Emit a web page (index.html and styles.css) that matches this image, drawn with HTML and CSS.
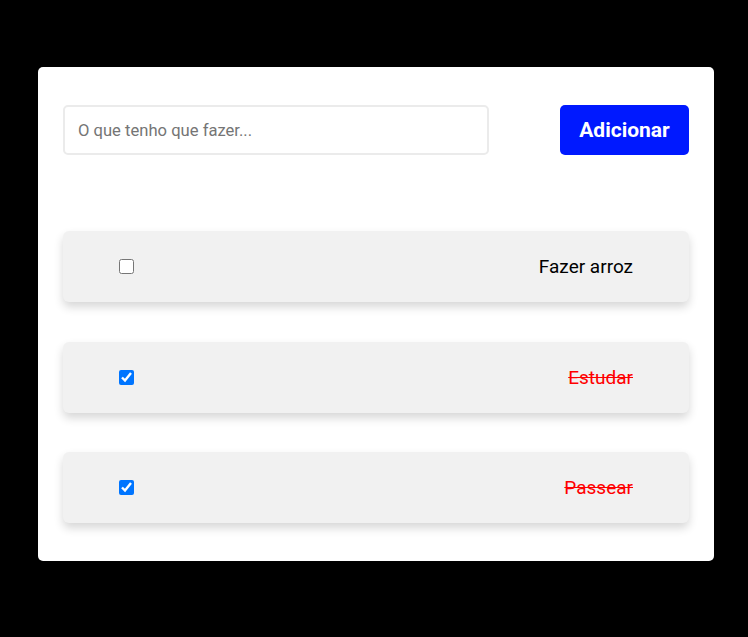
FILE: index.html
```html
<!DOCTYPE html>
<html lang="pt-BR">
<head>
<meta charset="utf-8">
<title>Tarefas</title>
<link rel="stylesheet" href="styles.css">
</head>
<body>
<main class="todo">
  <form class="todo-form">
    <input class="todo-input" type="text" placeholder="O que tenho que fazer...">
    <button class="todo-add" type="button">Adicionar</button>
  </form>
  <ul class="todo-list">
    <li class="todo-item">
      <input class="todo-check" type="checkbox">
      <span class="todo-text">Fazer arroz</span>
    </li>
    <li class="todo-item">
      <input class="todo-check" type="checkbox" checked>
      <span class="todo-text done">Estudar</span>
    </li>
    <li class="todo-item">
      <input class="todo-check" type="checkbox" checked>
      <span class="todo-text done">Passear</span>
    </li>
  </ul>
</main>
</body>
</html>
```

FILE: styles.css
```css
html, body {
  margin: 0;
  padding: 0;
  background: #000;
  height: 100%;
}
body {
  font-family: Roboto, "Liberation Sans", sans-serif;
  padding: 67px 34px 0 38px;
  box-sizing: border-box;
}
.todo {
  width: 676px;
  background: #fff;
  border-radius: 5px;
  padding: 38px 25px;
  box-sizing: border-box;
}
.todo-form {
  display: flex;
  justify-content: space-between;
  margin: 0;
}
.todo-input {
  width: 426px;
  height: 50px;
  box-sizing: border-box;
  border: 2px solid #ebebeb;
  border-radius: 5px;
  padding: 0 13px;
  font-family: Roboto, sans-serif;
  font-size: 16.6px;
  color: #333;
  outline: none;
}
.todo-input::placeholder {
  color: #757575;
}
.todo-add {
  width: 129px;
  height: 50px;
  border: none;
  border-radius: 5px;
  background: #0019ff;
  color: #fff;
  font-family: Roboto, sans-serif;
  font-weight: 700;
  font-size: 21px;
  padding: 0;
}
.todo-list {
  list-style: none;
  margin: 76px 0 0;
  padding: 0;
  display: flex;
  flex-direction: column;
  gap: 39.5px;
}
.todo-item {
  height: 71px;
  background: #f1f1f1;
  border-radius: 6px;
  box-shadow: 0 5px 10px rgba(0, 0, 0, 0.16);
  display: flex;
  align-items: center;
  justify-content: space-between;
  padding: 0 56px;
}
.todo-check {
  margin: 0;
  width: 15px;
  height: 15px;
}
.todo-text {
  font-size: 19px;
  color: #000;
}
.todo-text.done {
  color: #ff0000;
  text-decoration: line-through;
}
```
